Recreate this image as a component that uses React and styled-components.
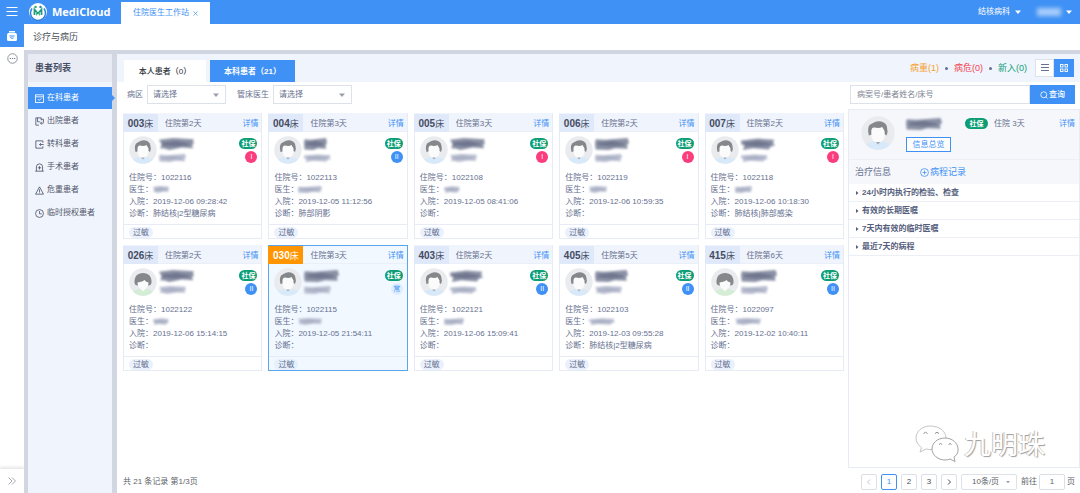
import React, { useState } from "react";
import styled, { createGlobalStyle, css } from "styled-components";

const c = {
  blue: "#3f91f5",
  text: "#66708f",
  dark: "#454b60",
  line: "#e6ebf5",
  pale: "#f0f4fc",
  band: "#d1d6e0",
  green: "#0d9d74",
  pink: "#fb3d7d",
  orange: "#ff9500",
};

const GlobalStyle = createGlobalStyle`
  * { box-sizing: border-box; }
  html, body { margin: 0; padding: 0; }
  body {
    background: #fff;
    color: ${c.text};
    font: 8px/12px "Liberation Sans", "Noto Sans CJK SC", sans-serif;
  }
  button, input, select { font: inherit; color: inherit; margin: 0; padding: 0; border: 0; background: none; border-radius: 0; outline: none; }
  a { color: ${c.blue}; text-decoration: none; }
  h1, h2, h3, p, ul, dl, dd, dt { margin: 0; padding: 0; font-size: inherit; font-weight: inherit; }
  ul { list-style: none; }
  svg { display: block; flex: none; }
`;

const Page = styled.div`
  display: flex;
  flex-direction: column;
  min-height: 100vh;
`;

/* ---------- top bar ---------- */
const TopBar = styled.header`
  display: flex;
  align-items: center;
  height: 24px;
  padding-right: 8px;
  background: ${c.blue};
  color: #fff;
`;
const RailButton = styled.button`
  display: flex;
  align-items: center;
  justify-content: center;
  flex: none;
  width: 24px;
  height: ${(p) => (p.$small ? 24 : 23)}px;
  background: ${(p) => (p.$active ? c.blue : "transparent")};
`;
const Brand = styled.h1`
  display: flex;
  align-items: center;
  gap: 5px;
  width: 92px;
  margin-left: 5px;
  font: 700 11px/24px "Open Sans", "Noto Sans", sans-serif;
`;
const PageTab = styled.div`
  display: flex;
  align-items: center;
  justify-content: space-between;
  align-self: flex-end;
  width: 89px;
  height: 22px;
  padding: 0 12px;
  background: #fff;
  color: ${c.blue};
`;
const TopMenus = styled.div`
  display: flex;
  gap: 16px;
  margin-left: auto;
`;
const TopMenu = styled.button`
  display: flex;
  align-items: center;
  gap: 5px;
`;
const HiddenUser = styled.span`
  width: 24px;
  height: 8px;
  background: #a9cdfb;
  filter: blur(2px);
`;

/* ---------- frame ---------- */
const Frame = styled.div`
  display: flex;
  flex: 1;
`;
const Rail = styled.nav`
  display: flex;
  flex-direction: column;
  flex: none;
  width: 24px;
`;
const RailFoot = styled.div`
  margin-top: auto;
  box-shadow: 0 -2px 3px rgba(0, 0, 0, 0.1);
`;
const Content = styled.div`
  display: flex;
  flex-direction: column;
  flex: 1;
  min-width: 0;
`;
const TitleBar = styled.h2`
  height: 26px;
  padding-left: 9px;
  color: #4b4f58;
  font-size: 9px;
  line-height: 26px;
`;
const Workspace = styled.div`
  display: flex;
  flex: 1;
  gap: 5px;
  padding: 4px 0 0 4px;
  background: ${c.band};
`;

/* ---------- sidebar ---------- */
const Sidebar = styled.aside`
  flex: none;
  width: 84px;
  background: ${c.pale};
`;
const SideTitle = styled.h3`
  height: 28px;
  margin-bottom: 5px;
  padding-left: 7px;
  background: #e8ebf4;
  color: ${c.dark};
  font-size: 9px;
  font-weight: 700;
  line-height: 28px;
`;
const SideLink = styled.a`
  position: relative;
  display: flex;
  align-items: center;
  gap: 3px;
  height: 22px;
  margin-bottom: 1px;
  padding-left: 7px;
  color: #50566a;
  ${(p) =>
    p.$active &&
    css`
      background: ${c.blue};
      color: #fff;
      &::after {
        content: "";
        position: absolute;
        left: 100%;
        top: 8px;
        border: 3px solid transparent;
        border-left-color: ${c.blue};
      }
    `}
`;

/* ---------- main ---------- */
const Main = styled.main`
  position: relative;
  display: flex;
  flex-direction: column;
  flex: 1;
  min-width: 0;
  background: #fff;
`;
const TabStrip = styled.div`
  display: flex;
  align-items: flex-end;
  gap: 4px;
  height: 28px;
  padding: 0 6px 0 7px;
  background: ${c.pale};
`;
const ListTab = styled.button`
  width: ${(p) => (p.$active ? 85 : 82)}px;
  height: 22px;
  padding-top: 1px;
  background: ${(p) => (p.$active ? c.blue : "#fff")};
  color: ${(p) => (p.$active ? "#fff" : "#303540")};
  font-weight: ${(p) => (p.$active ? 700 : 500)};
`;
const Counts = styled.div`
  display: flex;
  align-items: center;
  align-self: center;
  gap: 5px;
  margin-left: auto;
  font-size: 9px;
`;
const Count = styled.span`
  color: ${(p) => p.$color};
`;
const Dot = styled.i`
  width: 3px;
  height: 3px;
  margin: 0 1px;
  border-radius: 50%;
  background: ${c.text};
`;
const ViewSwitch = styled.div`
  display: flex;
  align-self: center;
  margin-left: 4px;
`;
const ViewButton = styled.button`
  display: flex;
  align-items: center;
  justify-content: center;
  width: ${(p) => (p.$active ? 20 : 19)}px;
  height: 18px;
  border: 1px solid ${(p) => (p.$active ? c.blue : "#dde3ee")};
  background: ${(p) => (p.$active ? c.blue : "#fff")};
  color: ${(p) => (p.$active ? "#fff" : c.text)};
`;
const FilterRow = styled.form`
  display: flex;
  align-items: center;
  height: 27px;
  padding: 0 5px 2px 10px;
`;
const Field = styled.label`
  display: flex;
  align-items: center;
  gap: 4px;
  margin-right: 11px;
`;
const SelectBox = styled.span`
  display: grid;
  align-items: center;
  width: ${(p) => p.$width}px;
  height: ${(p) => p.$height}px;
  border: 1px solid #dce1ea;
  border-radius: ${(p) => p.$radius || 0}px;
  & > * { grid-area: 1 / 1; }
  & > select {
    appearance: none;
    width: 100%;
    height: 100%;
    padding-left: ${(p) => p.$pad}px;
  }
  & > svg { justify-self: end; margin-right: 6px; pointer-events: none; }
`;
const Search = styled.div`
  display: flex;
  width: 225px;
  height: 19px;
  margin-left: auto;
`;
const SearchInput = styled.input`
  flex: 1;
  min-width: 0;
  padding-left: 6px;
  border: 1px solid #dce1ea !important;
  &::placeholder { color: #7d8392; opacity: 1; }
`;
const SearchButton = styled.button`
  display: flex;
  align-items: center;
  justify-content: center;
  gap: 1px;
  width: 45px;
  background: ${c.blue};
  color: #fff;
  font-weight: 500;
`;
const Board = styled.div`
  display: flex;
  flex: 1;
`;
const Cards = styled.div`
  display: grid;
  flex: 1;
  grid-template-columns: repeat(5, 1fr);
  gap: 6px;
  align-content: start;
  min-width: 0;
  padding: 4px 4px 0 6px;
`;

/* ---------- card ---------- */
const Card = styled.article`
  height: 126px;
  border: 1px solid ${(p) => (p.$selected ? "#5aa5f0" : c.line)};
  background: ${(p) => (p.$selected ? "#f1f8ff" : "#fff")};
`;
const CardHead = styled.header`
  display: flex;
  height: 19px;
  margin: -1px 0 0 -1px;
  padding-right: 3px;
  background: ${(p) => (p.$selected ? "transparent" : c.pale)};
  border-bottom: 1px solid #eaeff8;
  border-top: 1px solid ${(p) => (p.$selected ? "#5aa5f0" : "transparent")};
  line-height: 20px;
`;
const Bed = styled.span`
  width: 35px;
  height: 18px;
  margin-right: 7px;
  text-align: center;
  font-size: 9px;
  background: ${(p) => (p.$selected ? c.orange : "#dfe9fa")};
  color: ${(p) => (p.$selected ? "#fff" : c.dark)};
  & > b { font-size: 10px; }
`;
const HeadLink = styled.a`
  margin-left: auto;
`;
const Person = styled.div`
  display: flex;
  gap: 2px;
  height: 40px;
  padding: 4px 4px 0 5px;
`;
const Names = styled.div`
  display: flex;
  flex-direction: column;
  gap: 4px;
  padding-top: 2px;
`;
const Badges = styled.div`
  display: flex;
  flex-direction: column;
  align-items: flex-end;
  gap: 2px;
  margin: 2px 0 0 auto;
`;
const Insurance = styled.span`
  width: ${(p) => p.$width || 18}px;
  height: 11px;
  border-radius: 6px;
  background: ${c.green};
  color: #fff;
  font-size: 7px;
  font-weight: 700;
  line-height: 11px;
  text-align: center;
`;
const levelColors = {
  I: [c.pink, "#fff"],
  II: [c.blue, "#fff"],
  常: ["#deeeff", c.blue],
};
const Level = styled.span`
  width: 12px;
  height: 12px;
  border-radius: 50%;
  background: ${(p) => levelColors[p.$level][0]};
  color: ${(p) => levelColors[p.$level][1]};
  font-size: 7px;
  line-height: 12px;
  text-align: center;
`;
const Facts = styled.dl`
  height: 52px;
  padding-left: 5px;
`;
const Fact = styled.div`
  display: flex;
  height: 12px;
  line-height: 12px;
  white-space: nowrap;
`;
const Masked = styled.dd`
  padding-top: 2px;
`;
const CardFoot = styled.footer`
  display: flex;
  padding: 2px 5px;
  border-top: 1px solid ${c.line};
`;
const Tag = styled.span`
  padding: 0 4px;
  border-radius: 6px;
  background: ${(p) => (p.$selected ? "#e4f0fe" : "#eaf1fc")};
  line-height: 11px;
`;

/* ---------- detail panel ---------- */
const Panel = styled.aside`
  flex: none;
  width: 232px;
  border: 1px solid ${c.line};
`;
const Profile = styled.div`
  display: flex;
  height: 50px;
  padding: 6px 4px 0 12px;
  border-bottom: 1px solid #eceff5;
  background: #f5f7fb;
`;
const ProfileMain = styled.div`
  display: flex;
  flex-direction: column;
  gap: 7px;
  width: 59px;
  margin-left: 11px;
  padding-top: 2px;
`;
const Outline = styled.button`
  width: 45px;
  height: 15px;
  border: 1px solid ${c.blue} !important;
  background: #fff;
  color: ${c.blue};
`;
const ProfileLine = styled.div`
  display: flex;
  flex: 1;
  gap: 6px;
  height: 12px;
  margin-top: 2px;
`;
const PanelTitle = styled.div`
  display: flex;
  align-items: center;
  gap: 29px;
  height: 24px;
  padding-left: 6px;
  background: #f5f7fb;
  font-size: 9px;
`;
const AddLink = styled.a`
  display: flex;
  align-items: center;
  gap: 1px;
`;
const Section = styled.button`
  display: flex;
  align-items: center;
  gap: 3px;
  width: 100%;
  height: 18px;
  padding-left: 7px;
  border-bottom: 1px solid #eceff5;
  color: #555e7c;
  font-weight: 700;
`;

/* ---------- pager ---------- */
const Pager = styled.footer`
  display: flex;
  align-items: center;
  gap: 4px;
  height: 25px;
  padding: 2px 5px 0 6px;
  color: #5b5f68;
`;
const PagerButton = styled.button`
  display: flex;
  align-items: center;
  justify-content: center;
  width: 16px;
  height: 16px;
  border: 1px solid ${(p) => (p.$active ? c.blue : "#dcdfe6")};
  border-radius: 2px;
  color: ${(p) => (p.$active ? c.blue : p.disabled ? "#b4b8c0" : "#4a4e57")};
`;
const Total = styled.span`
  margin-right: auto;
`;
const PageInput = styled.input`
  width: 26px;
  height: 16px;
  border: 1px solid #dcdfe6 !important;
  border-radius: 2px !important;
  text-align: center;
`;
const Jump = styled.label`
  display: flex;
  align-items: center;
  gap: 2px;
`;
const Watermark = styled.div`
  position: absolute;
  right: 35px;
  bottom: 30px;
  display: flex;
  align-items: center;
  gap: 5px;
  color: #fff;
  font: 27px/40px "Noto Sans CJK SC", sans-serif;
  text-shadow: -1px 0 0 #c4c5c7, 1px 1px 1px #9b9d9f;
  pointer-events: none;
`;

/* ---------- drawings ---------- */
const Caret = ({ size = 6, color = "#9a9ea8" }) => (
  <svg width={size} height={size} viewBox="0 0 6 6" fill={color}>
    <path d="M0 1.500h6L3 5z" />
  </svg>
);

const Stroke = ({ size = 9, box = 16, w = 1.6, children }) => (
  <svg width={size} height={size} viewBox={`0 0 ${box} ${box}`} fill="none" stroke="currentColor" strokeWidth={w}>
    {children}
  </svg>
);

const sideIcons = {
  check: <><rect x="1" y="1.500" width="14" height="13.500" /><path d="M1.500 5h13M5 9l2.500 2.500L11.500 7.500" /></>,
  out: <><path d="M7 14.500H1.500V1.500H11V6M4.500 1.500v7h4M11 4h4v6M15 11h-5M12 8.500 9.500 11l2.500 2.500" /></>,
  transfer: <><path d="M14 5V1.500H1.500v13H14V11M15.500 8H8M10.500 5.500 8 8l2.500 2.500" /></>,
  surgery: <><path d="M.5 14.500h15M2.500 14.500V7q0-5.500 5.500-5.500T13.500 7v7.500M8 5.500v6M5 8.500h6" /></>,
  danger: <><path d="M8 1.500 15 14.500H1zM8 6v4.500M8 11.500v1.500" /></>,
  clock: <><circle cx="8" cy="8" r="7" /><path d="M8 3.500V8.500h4" /></>,
};

const Logo = () => (
  <svg width="18" height="18" viewBox="0 0 36 36">
    <circle cx="18" cy="18" r="18" fill="#fff" />
    <path d="M6 11a15 15 0 1 0 24 0" fill="none" stroke="#2f7fe0" strokeWidth="3" />
    <path d="M11 24V13l7 8 7-8v11" fill="none" stroke="#1c9c7c" strokeWidth="3.500" />
    <path d="M15 25v-7M21 25v-7" stroke="#55bd8d" strokeWidth="2" />
    <circle cx="13" cy="8" r="2.500" fill="#35a56f" />
    <circle cx="23" cy="8" r="2.500" fill="#2b8c9d" />
  </svg>
);

const Avatar = ({ female, size = 28 }) => (
  <svg width={size} height={size} viewBox="0 0 56 56">
    <circle cx="28" cy="28" r="27.500" fill="#e9ebee" />
    <path d="M8 47q6-5 15-5l5 5 5-5q9 0 15 5a27.500 27.500 0 0 1-40 0z" fill={female ? "#d3eed5" : "#d8e9fa"} />
    <path d="M23 37h10v5l-5 5-5-5z" fill="#f7f7f7" />
    {female ? (
      <>
        <path d="M11 30C10 17 17 10 28 10s18 7 17 20q-1 5-6 5H17q-5 0-6-5z" fill="#85878b" />
        <path d="M17 29q11-2 14-5 3 4 8 5c0 8-5 14-11 14s-11-6-11-14z" fill="#fbfbfb" />
      </>
    ) : (
      <>
        <path d="M13 32q-3-11 1-17l5-3q9-6 19-1 5 3 5 9 2 6-1 12l-3-2-22 1z" fill="#85878b" />
        <path d="M17 33V24q1-6 5-5 8 2 13-1l4 7v8c-1 7-6 11-11 11s-10-4-11-11z" fill="#fbfbfb" />
        <path d="m24 43 4 4 4-4z" fill="#a3abb5" />
      </>
    )}
  </svg>
);

const smudgeShapes = [
  "M0 3 40 0 100 2 97 5 100 9 94 12 98 17 65 16 30 20 12 17 4 18 7 10z",
  "M2 2 30 3 96 0 100 8 94 12 96 18 60 17 40 20 2 19 0 9z",
  "M0 4 50 1 98 3 94 8 100 12 86 15 82 19 35 17 6 20 10 12 1 11z",
];
const Smudge = ({ w, h, shape = 0, light }) => (
  <svg width={w} height={h} viewBox="0 0 100 20" preserveAspectRatio="none" style={{ overflow: "visible", filter: "blur(1px)" }}>
    <path d={smudgeShapes[shape]} fill={light ? "#b9bed0" : "#8c92a6"} />
    <path d="M8 8 50 5 88 9 84 12 45 14 10 12z" fill={light ? "#a9afc4" : "#6f768e"} />
  </svg>
);

const WeChat = () => (
  <svg width="44" height="38" viewBox="0 0 44 38" fill="#fff" stroke="#c3c5c7" strokeWidth="1">
    <path d="M15 2C7 2 1 7.500 1 14c0 4 2 7 5.500 9.500L5 28l6-3q3 1 7 .5C30 25 31 18 31 14 31 7 24 2 15 2z" />
    <path d="M30 14c-7.500 0-13 5-13 11s6 11 13 11q3 0 5-1l5 2.500-1-4.500c3-2 4.500-5 4-8 0-6-6-11-13-11z" stroke="#a0a2a4" />
    <path d="M8.500 9.500q2-2.500 4 0M20 9.500q2-2.500 4 0M24 20.500q1.500-2 3 0M33.500 20.500q1.500-2 3 0" fill="none" stroke="#8b8d8f" />
  </svg>
);

/* ---------- data ---------- */
const patients = [
  { bed: "003", day: 2, level: "I", no: "1022116", doc: 16, at: "2019-12-06 09:28:42", dx: "肺结核|2型糖尿病", name: [35, 0] },
  { bed: "004", day: 3, level: "II", no: "1022113", doc: 24, at: "2019-12-05 11:12:56", dx: "肺部阴影", name: [23, 1] },
  { bed: "005", day: 3, level: "I", no: "1022108", doc: 16, at: "2019-12-05 08:41:06", dx: "", name: [35, 0] },
  { bed: "006", day: 2, level: "I", no: "1022119", doc: 18, at: "2019-12-06 10:59:35", dx: "", name: [34, 1] },
  { bed: "007", day: 2, level: "I", no: "1022118", doc: 17, at: "2019-12-06 10:18:30", dx: "肺结核|肺部感染", name: [34, 2] },
  { bed: "026", day: 2, level: "II", no: "1022122", doc: 16, at: "2019-12-06 15:14:15", dx: "", name: [35, 0], female: true },
  { bed: "030", day: 3, level: "常", no: "1022115", doc: 24, at: "2019-12-05 21:54:11", dx: "", name: [35, 1] },
  { bed: "403", day: 2, level: "II", no: "1022121", doc: 20, at: "2019-12-06 15:09:41", dx: "", name: [33, 2] },
  { bed: "405", day: 5, level: "II", no: "1022103", doc: 26, at: "2019-12-03 09:55:28", dx: "肺结核|2型糖尿病", name: [33, 1] },
  { bed: "415", day: 6, level: "II", no: "1022097", doc: 26, at: "2019-12-02 10:40:11", dx: "", name: [36, 1], female: true },
];
const sideItems = [
  ["check", "在科患者"],
  ["out", "出院患者"],
  ["transfer", "转科患者"],
  ["surgery", "手术患者"],
  ["danger", "危重患者"],
  ["clock", "临时授权患者"],
];
const sections = ["24小时内执行的检验、检查", "有效的长期医嘱", "7天内有效的临时医嘱", "最近7天的病程"];

function PatientCard({ p, index, selected, onSelect }) {
  return (
    <Card $selected={selected} onClick={onSelect}>
      <CardHead $selected={selected}>
        <Bed $selected={selected}><b>{p.bed}</b>床</Bed>
        <span>住院第{p.day}天</span>
        <HeadLink href="#detail">详情</HeadLink>
      </CardHead>
      <Person>
        <Avatar female={p.female} />
        <Names>
          <Smudge w={p.name[0]} h={12} shape={p.name[1]} />
          <Smudge w={27} h={8} shape={(index + 1) % 3} light />
        </Names>
        <Badges>
          <Insurance>社保</Insurance>
          <Level $level={p.level}>{p.level}</Level>
        </Badges>
      </Person>
      <Facts>
        <Fact><dt>住院号：</dt><dd>{p.no}</dd></Fact>
        <Fact><dt>医生：</dt><Masked><Smudge w={p.doc} h={7} shape={index % 3} light /></Masked></Fact>
        <Fact><dt>入院：</dt><dd>{p.at}</dd></Fact>
        <Fact><dt>诊断：</dt><dd>{p.dx}</dd></Fact>
      </Facts>
      <CardFoot><Tag $selected={selected}>过敏</Tag></CardFoot>
    </Card>
  );
}

export default function App() {
  const [bed, setBed] = useState("030");
  return (
    <Page>
      <GlobalStyle />
      <TopBar>
        <RailButton $small aria-label="菜单">
          <Stroke size={12} box={12} w={1}><path d="M.5 1.500h11M.5 5.500h11M.5 9.500h11" /></Stroke>
        </RailButton>
        <Brand><Logo />MediCloud</Brand>
        <PageTab>
          住院医生工作站
          <button aria-label="关闭"><Stroke size={5} box={6} w={0.8}><path d="m.5.5 5 5m0-5-5 5" /></Stroke></button>
        </PageTab>
        <TopMenus>
          <TopMenu>结核病科<Caret color="#fff" /></TopMenu>
          <TopMenu aria-label="用户"><HiddenUser /><Caret color="#fff" /></TopMenu>
        </TopMenus>
      </TopBar>
      <Frame>
        <Rail>
          <RailButton $active aria-label="工作站">
            <svg width="10" height="10" viewBox="0 0 20 20">
              <path d="M4 0h12v3H4zM2 4h16l2 3v10q0 3-3 3H3q-3 0-3-3V7z" fill="#fff" />
              <path d="M5 10h10M7 12q0 4 6 2" fill="none" stroke={c.blue} strokeWidth="2" />
            </svg>
          </RailButton>
          <RailButton aria-label="更多">
            <svg width="11" height="11" viewBox="0 0 22 22" fill="none" stroke="#777c86" strokeWidth="1.600">
              <circle cx="11" cy="11" r="9.500" />
              <path d="M5.500 11h2.500M9.750 11h2.500M14 11h2.500" strokeWidth="2.200" />
            </svg>
          </RailButton>
          <RailFoot>
            <RailButton $small aria-label="展开">
              <svg width="8" height="8" viewBox="0 0 8 8" fill="none" stroke="#8d929c"><path d="m.5.5 3.500 3.500-3.500 3.500M4 .5 7.500 4 4 7.500" strokeWidth=".8" /></svg>
            </RailButton>
          </RailFoot>
        </Rail>
        <Content>
          <TitleBar>诊疗与病历</TitleBar>
          <Workspace>
            <Sidebar>
              <SideTitle>患者列表</SideTitle>
              {sideItems.map(([icon, label], i) => (
                <SideLink key={label} href="#list" $active={i === 0}>
                  <Stroke size={9} w={1.5}>{sideIcons[icon]}</Stroke>
                  {label}
                </SideLink>
              ))}
            </Sidebar>
            <Main>
              <TabStrip>
                <ListTab>本人患者（0）</ListTab>
                <ListTab $active>本科患者（21）</ListTab>
                <Counts>
                  <Count $color="#f5a02c">病重(1)</Count><Dot />
                  <Count $color="#f2434f">病危(0)</Count><Dot />
                  <Count $color="#109f78">新入(0)</Count>
                </Counts>
                <ViewSwitch>
                  <ViewButton aria-label="列表">
                    <Stroke size={8} box={8} w={1}><path d="M0 .5h8M0 3.500h8M0 6.500h8" /></Stroke>
                  </ViewButton>
                  <ViewButton $active aria-label="卡片">
                    <Stroke size={8} box={16} w={1.8}>
                      <rect x="1" y="1" width="5" height="5" /><rect x="10" y="1" width="5" height="5" />
                      <rect x="1" y="10" width="5" height="5" /><rect x="10" y="10" width="5" height="5" />
                    </Stroke>
                  </ViewButton>
                </ViewSwitch>
              </TabStrip>
              <FilterRow onSubmit={(e) => e.preventDefault()}>
                {["病区", "管床医生"].map((label) => (
                  <Field key={label}>
                    {label}
                    <SelectBox $width={79} $height={19} $pad={5}>
                      <select><option>请选择</option></select>
                      <Caret />
                    </SelectBox>
                  </Field>
                ))}
                <Search>
                  <SearchInput aria-label="搜索患者" placeholder="病案号/患者姓名/床号" />
                  <SearchButton>
                    <Stroke size={8} w={1.6}><circle cx="7.500" cy="7.500" r="6" /><path d="m11.500 11.500 3.500 3.500" /></Stroke>
                    查询
                  </SearchButton>
                </Search>
              </FilterRow>
              <Board>
                <Cards>
                  {patients.map((p, i) => (
                    <PatientCard key={p.bed} p={p} index={i} selected={p.bed === bed} onSelect={() => setBed(p.bed)} />
                  ))}
                </Cards>
                <Panel>
                  <Profile>
                    <Avatar size={34} />
                    <ProfileMain>
                      <Smudge w={36} h={12} shape={1} />
                      <Outline>信息总览</Outline>
                    </ProfileMain>
                    <ProfileLine>
                      <Insurance $width={23}>社保</Insurance>
                      <span>住院 3天</span>
                      <HeadLink href="#detail">详情</HeadLink>
                    </ProfileLine>
                  </Profile>
                  <PanelTitle>
                    <h3>治疗信息</h3>
                    <AddLink href="#record">
                      <Stroke size={9} w={1.4}><circle cx="8" cy="8" r="7" /><path d="M8 4.500v7M4.500 8h7" /></Stroke>
                      病程记录
                    </AddLink>
                  </PanelTitle>
                  {sections.map((s) => (
                    <Section key={s}>
                      <svg width="3" height="4" viewBox="0 0 3 4" fill="currentColor"><path d="M0 0v4l2.500-2z" /></svg>
                      {s}
                    </Section>
                  ))}
                </Panel>
              </Board>
              <Pager>
                <Total>共 21 条记录 第1/3页</Total>
                <PagerButton disabled aria-label="上一页"><Stroke size={6} box={6} w={0.8}><path d="M4 .5 1.500 3 4 5.500" /></Stroke></PagerButton>
                <PagerButton $active>1</PagerButton>
                <PagerButton>2</PagerButton>
                <PagerButton>3</PagerButton>
                <PagerButton aria-label="下一页"><Stroke size={6} box={6} w={1}><path d="M2 .5 4.500 3 2 5.500" /></Stroke></PagerButton>
                <SelectBox $width={56} $height={16} $pad={10} $radius={2}>
                  <select aria-label="每页条数"><option>10条/页</option></select>
                  <Caret size={4} />
                </SelectBox>
                <Jump>前往<PageInput defaultValue="1" />页</Jump>
              </Pager>
              <Watermark><WeChat />九明珠</Watermark>
            </Main>
          </Workspace>
        </Content>
      </Frame>
    </Page>
  );
}
